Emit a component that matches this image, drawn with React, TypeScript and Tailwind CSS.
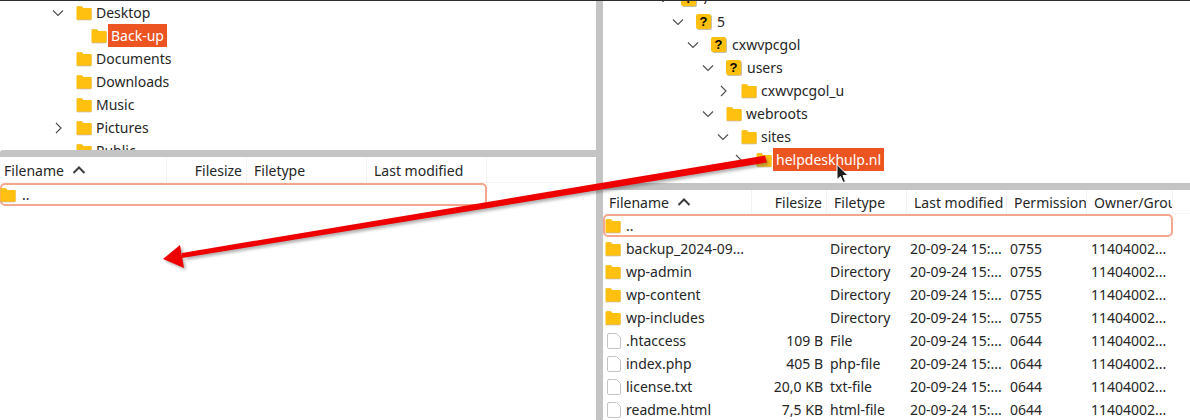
import React from 'react';

const Chevron = ({ open }: { open: boolean }) => (
  <svg width="18" height="18" viewBox="0 0 18 18" fill="none" stroke="#4d4d4d" strokeWidth="1.1">
    {open ? <path d="M4 6.5l5 5 5-5" /> : <path d="M7 4l5 5-5 5" />}
  </svg>
);

const Folder = () => (
  <svg width="16" height="16" viewBox="0 0 16 16" className="shrink-0">
    <path d="M1 1.5h5l1.5 2H15.5v11H1z" fill="#c9a64a" />
    <path d="M0.5 2.2q0-1 1-1h4.2l1.6 1.8h7.2q1 0 1 1v9.8q0 1-1 1H1.5q-1 0-1-1z" fill="#ffc010" />
    <path d="M0.5 13.8q0 1 1 1h13q1 0 1-1v.5q0 1-1 1h-13q-1 0-1-1z" fill="#b9a98a" />
  </svg>
);

const Unknown = () => (
  <span className="flex h-[15px] w-[15px] shrink-0 items-center justify-center rounded-[2px] bg-[#ffc010] text-[13px] font-bold leading-none text-black shadow-[1px_1px_0_#c8bfa8] [font-family:'Liberation_Sans',sans-serif]">
    ?
  </span>
);

const FileIcon = () => (
  <svg width="14" height="16" viewBox="0 0 14 16" fill="#fff" stroke="#c4c4c4" strokeWidth="1" className="ml-[2px] shrink-0">
    <path d="M1.5 0.5h8l4 4v9.5q0 1.5-1.5 1.5H2q-1.5 0-1.5-1.5v-12q0-1.5 1.5-1.5z" />
  </svg>
);

type TreeRow = { name: string; indent: string; chevron?: 'open' | 'closed'; icon?: 'q'; selected?: boolean };

const leftTree: TreeRow[] = [
  { name: 'Desktop', indent: 'pl-[49px]', chevron: 'open' },
  { name: 'Back-up', indent: 'pl-[64px]', selected: true },
  { name: 'Documents', indent: 'pl-[49px]' },
  { name: 'Downloads', indent: 'pl-[49px]' },
  { name: 'Music', indent: 'pl-[49px]' },
  { name: 'Pictures', indent: 'pl-[49px]', chevron: 'closed' },
  { name: 'Public', indent: 'pl-[49px]' },
];

const rightTree: TreeRow[] = [
  { name: '7', indent: 'pl-[51px]', chevron: 'open', icon: 'q' },
  { name: '5', indent: 'pl-[66px]', chevron: 'open', icon: 'q' },
  { name: 'cxwvpcgol', indent: 'pl-[81px]', chevron: 'open', icon: 'q' },
  { name: 'users', indent: 'pl-[96px]', chevron: 'open', icon: 'q' },
  { name: 'cxwvpcgol_u', indent: 'pl-[111px]', chevron: 'closed' },
  { name: 'webroots', indent: 'pl-[96px]', chevron: 'open' },
  { name: 'sites', indent: 'pl-[111px]', chevron: 'open' },
  { name: 'helpdeskhulp.nl', indent: 'pl-[126px]', chevron: 'closed', selected: true },
];

const Tree = ({ rows }: { rows: TreeRow[] }) => (
  <>
    {rows.map((r) => (
      <div key={r.name} className={`flex h-[23px] shrink-0 items-center ${r.indent}`}>
        <span className="flex w-[27px] shrink-0">{r.chevron && <Chevron open={r.chevron === 'open'} />}</span>
        {r.icon === 'q' ? <Unknown /> : <Folder />}
        {r.selected ? (
          <span className="ml-[1px] flex h-[23px] items-center bg-[#ec5422] px-[3px] text-white">{r.name}</span>
        ) : (
          <span className={r.icon === 'q' ? 'ml-[6px]' : 'ml-[4px]'}>{r.name}</span>
        )}
      </div>
    ))}
  </>
);

const Header = ({ name, right, first, cls }: { name: string; right?: boolean; first?: boolean; cls: string }) => (
  <div className={`flex items-center border-r border-[#f3f3f3] pt-[1px] ${right ? 'justify-end pr-[4px]' : 'pl-[7px]'} ${cls}`}>
    <span className="overflow-hidden whitespace-nowrap">{name}</span>
    {first && (
      <svg width="14" height="10" viewBox="0 0 14 10" fill="none" stroke="#3d3d3d" strokeWidth="2" className="ml-[8px]">
        <path d="M1.5 8l5.5-5.5L12.5 8" />
      </svg>
    )}
  </div>
);

type FileRow = { name: string; size?: string; type: string; perm: string; dir: boolean };

const files: FileRow[] = [
  { name: 'backup_2024-09...', type: 'Directory', perm: '0755', dir: true },
  { name: 'wp-admin', type: 'Directory', perm: '0755', dir: true },
  { name: 'wp-content', type: 'Directory', perm: '0755', dir: true },
  { name: 'wp-includes', type: 'Directory', perm: '0755', dir: true },
  { name: '.htaccess', size: '109 B', type: 'File', perm: '0644', dir: false },
  { name: 'index.php', size: '405 B', type: 'php-file', perm: '0644', dir: false },
  { name: 'license.txt', size: '20,0 KB', type: 'txt-file', perm: '0644', dir: false },
  { name: 'readme.html', size: '7,5 KB', type: 'html-file', perm: '0644', dir: false },
];

export default function App() {
  return (
    <div className="flex h-[420px] w-[1190px] overflow-hidden border-t border-[#2c2c2c] bg-white text-[14px] text-[#262626] [font-family:'Noto_Sans',sans-serif]">
      {/* local side */}
      <div className="flex w-[596px] shrink-0 flex-col">
        <div className="flex h-[149px] shrink-0 flex-col overflow-hidden">
          <Tree rows={leftTree} />
        </div>
        <div className="h-[7px] shrink-0 rounded-tl-[3px] bg-[#c4c4c4]" />
        <div className="grid h-[26px] shrink-0 grid-cols-[167px_80px_120px_120px] border-b border-[#f5f5f5]">
          <Header name="Filename" first cls="!pl-[4px]" />
          <Header name="Filesize" right cls="" />
          <Header name="Filetype" cls="" />
          <Header name="Last modified" cls="" />
        </div>
        <div className="flex h-[23px] w-[487px] items-center rounded-[5px] border-2 border-[#f5a68e] pl-0">
          <span className="-ml-[2px] flex items-center">
            <Folder />
          </span>
          <span className="ml-[6px]">..</span>
        </div>
      </div>

      <div className="w-[7px] shrink-0 bg-[#c4c4c4]" />

      {/* remote side */}
      <div className="flex min-w-0 flex-1 flex-col">
        <div className="-mt-[14px] flex h-[196px] shrink-0 flex-col overflow-hidden">
          <Tree rows={rightTree} />
        </div>
        <div className="h-[7px] shrink-0 bg-[#c4c4c4]" />
        <div className="grid h-[24px] shrink-0 grid-cols-[149px_75px_80px_100px_80px_86px] border-b border-[#f5f5f5]">
          <Header name="Filename" first cls="!pl-[6px]" />
          <Header name="Filesize" right cls="" />
          <Header name="Filetype" cls="" />
          <Header name="Last modified" cls="" />
          <Header name="Permission" cls="" />
          <Header name="Owner/Group" cls="" />
        </div>
        <div className="flex h-[23px] w-[570px] shrink-0 items-center rounded-[5px] border-2 border-[#f5a68e] pl-[0px]">
          <Folder />
          <span className="ml-[5px]">..</span>
        </div>
        {files.map((f) => (
          <div key={f.name} className="grid h-[23px] shrink-0 grid-cols-[149px_75px_80px_100px_80px_86px] items-center whitespace-nowrap">
            <div className="flex items-center pl-[2px]">
              {f.dir ? <Folder /> : <FileIcon />}
              <span className="ml-[5px]">{f.name}</span>
            </div>
            <div className="pr-[4px] text-right">{f.size}</div>
            <div className="pl-[3px]">{f.type}</div>
            <div className="pl-[3px]">20-09-24 15:...</div>
            <div className="pl-[3px]">{f.perm}</div>
            <div className="pl-[4px]">11404002...</div>
          </div>
        ))}
      </div>

      {/* annotation drawn over the screenshot */}
      <svg width="1190" height="420" viewBox="0 0 1190 420" className="pointer-events-none absolute left-0 top-0">
        <defs>
          <filter id="soft" x="-5%" y="-20%" width="110%" height="140%">
            <feGaussianBlur stdDeviation="1.5" />
          </filter>
        </defs>
        <g fill="#555" opacity="0.45" filter="url(#soft)">
          <path d="M767 158L769 165L186 260L186 255z" />
          <path d="M165 261L182 247L186 270z" />
        </g>
        <path d="M765 155.5L767 162.5L182 258L182 253z" fill="#ee0000" />
        <path d="M163 259L180 245L184 268z" fill="#ee0000" />
        <path d="M837 164.5v15l3.5-3 2.5 6 2.5-1-2.5-6h5z" fill="#1c1c1c" stroke="#fff" strokeWidth="1" />
      </svg>
    </div>
  );
}
